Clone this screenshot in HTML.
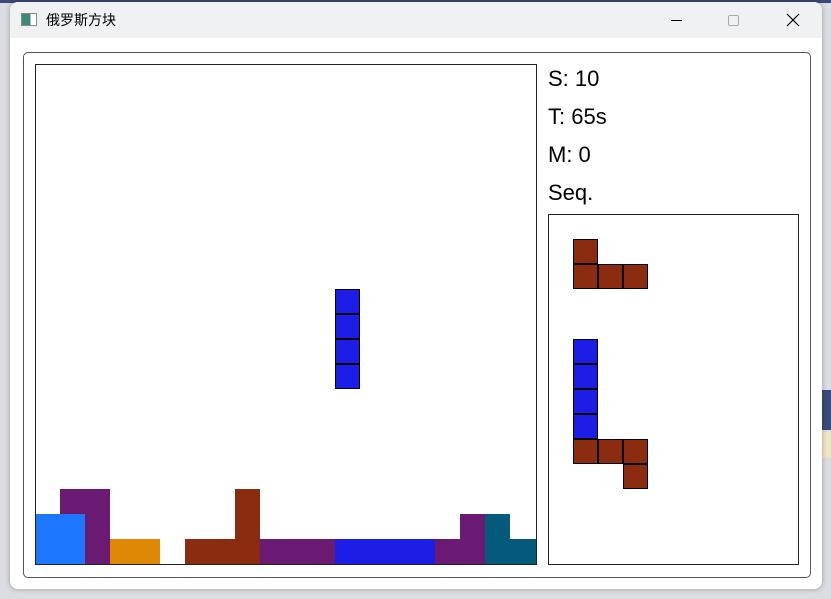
<!DOCTYPE html>
<html><head><meta charset="utf-8"><style>
*{margin:0;padding:0;box-sizing:border-box}
body{width:831px;height:599px;overflow:hidden;background:#dcdde2;position:relative;font-family:"Liberation Sans","Noto Sans CJK SC",sans-serif}
.win{position:absolute;left:10px;top:2px;width:812px;height:587px;background:#fff;border-radius:8px;overflow:hidden;box-shadow:0 0 6px rgba(0,0,0,.3)}
.tb{position:absolute;left:0;top:0;width:100%;height:36px;background:#eff1f3}
.title{position:absolute;left:36px;top:8px;font-size:14px;color:#000}
.ico{position:absolute;left:11px;top:11px;width:16px;height:13px;border:1px solid #888;background:linear-gradient(90deg,#3a8a7a 60%,#fff 60%)}
.a{position:absolute}
.c{position:absolute;width:25px;height:25px}
.p{position:absolute;width:25px;height:25px;border:1.5px solid #000}
.t{position:absolute;left:548px;font-size:22px;color:#000;font-family:"Liberation Sans",sans-serif}
</style></head><body>
<div class="a" style="left:0;top:0;width:831px;height:3px;background:#3b4a7a"></div>
<div class="a" style="left:822px;top:390px;width:9px;height:40px;background:#3b4a7a"></div>
<div class="a" style="left:822px;top:432px;width:9px;height:26px;background:#f2e6c8"></div>
<div class="win">
<div class="tb"></div>
<div class="ico"></div>
<div class="title">俄罗斯方块</div>
<div class="a" style="left:661px;top:18px;width:11px;height:1px;background:#000"></div>
<div class="a" style="left:718px;top:13px;width:11px;height:11px;border:1px solid #aaa;border-radius:2px"></div>
<svg class="a" style="left:776px;top:11px" width="14" height="14"><path d="M1 1L13 13M13 1L1 13" stroke="#000" stroke-width="1.2"/></svg>
</div>
<div class="a" style="left:23px;top:52px;width:788px;height:526px;border:1.5px solid #555;border-radius:5px"></div>
<div class="a" style="left:35px;top:64px;width:502px;height:501px;border:1.5px solid #222"></div>
<div class="a" style="left:548px;top:214px;width:251px;height:351px;border:1.5px solid #222"></div>
<div class="t" style="top:66px">S: 10</div>
<div class="t" style="top:104px">T: 65s</div>
<div class="t" style="top:142px">M: 0</div>
<div class="t" style="top:180px">Seq.</div>
<!-- falling -->
<div class="p" style="left:335px;top:289px;background:#1c1ee8"></div>
<div class="p" style="left:335px;top:314px;background:#1c1ee8"></div>
<div class="p" style="left:335px;top:339px;background:#1c1ee8"></div>
<div class="p" style="left:335px;top:364px;background:#1c1ee8"></div>
<!-- stack -->
<div class="a" style="left:60px;top:489px;width:50px;height:25px;background:#6a1a72"></div>
<div class="a" style="left:85px;top:514px;width:25px;height:50px;background:#6a1a72"></div>
<div class="a" style="left:36px;top:514px;width:49px;height:50px;background:#1e78ff"></div>
<div class="a" style="left:110px;top:539px;width:50px;height:25px;background:#df8806"></div>
<div class="a" style="left:185px;top:539px;width:75px;height:25px;background:#8b2c10"></div>
<div class="a" style="left:235px;top:489px;width:25px;height:50px;background:#8b2c10"></div>
<div class="a" style="left:260px;top:539px;width:75px;height:25px;background:#6a1a72"></div>
<div class="a" style="left:335px;top:539px;width:100px;height:25px;background:#1c1ee8"></div>
<div class="a" style="left:435px;top:539px;width:50px;height:25px;background:#6a1a72"></div>
<div class="a" style="left:460px;top:514px;width:25px;height:25px;background:#6a1a72"></div>
<div class="a" style="left:485px;top:514px;width:25px;height:50px;background:#045a7a"></div>
<div class="a" style="left:510px;top:539px;width:26px;height:25px;background:#045a7a"></div>
<!-- preview -->
<div class="p" style="left:573px;top:239px;background:#8b2c10"></div>
<div class="p" style="left:573px;top:264px;background:#8b2c10"></div>
<div class="p" style="left:598px;top:264px;background:#8b2c10"></div>
<div class="p" style="left:623px;top:264px;background:#8b2c10"></div>
<div class="p" style="left:573px;top:339px;background:#1c1ee8"></div>
<div class="p" style="left:573px;top:364px;background:#1c1ee8"></div>
<div class="p" style="left:573px;top:389px;background:#1c1ee8"></div>
<div class="p" style="left:573px;top:414px;background:#1c1ee8"></div>
<div class="p" style="left:573px;top:439px;background:#8b2c10"></div>
<div class="p" style="left:598px;top:439px;background:#8b2c10"></div>
<div class="p" style="left:623px;top:439px;background:#8b2c10"></div>
<div class="p" style="left:623px;top:464px;background:#8b2c10"></div>
</body></html>
